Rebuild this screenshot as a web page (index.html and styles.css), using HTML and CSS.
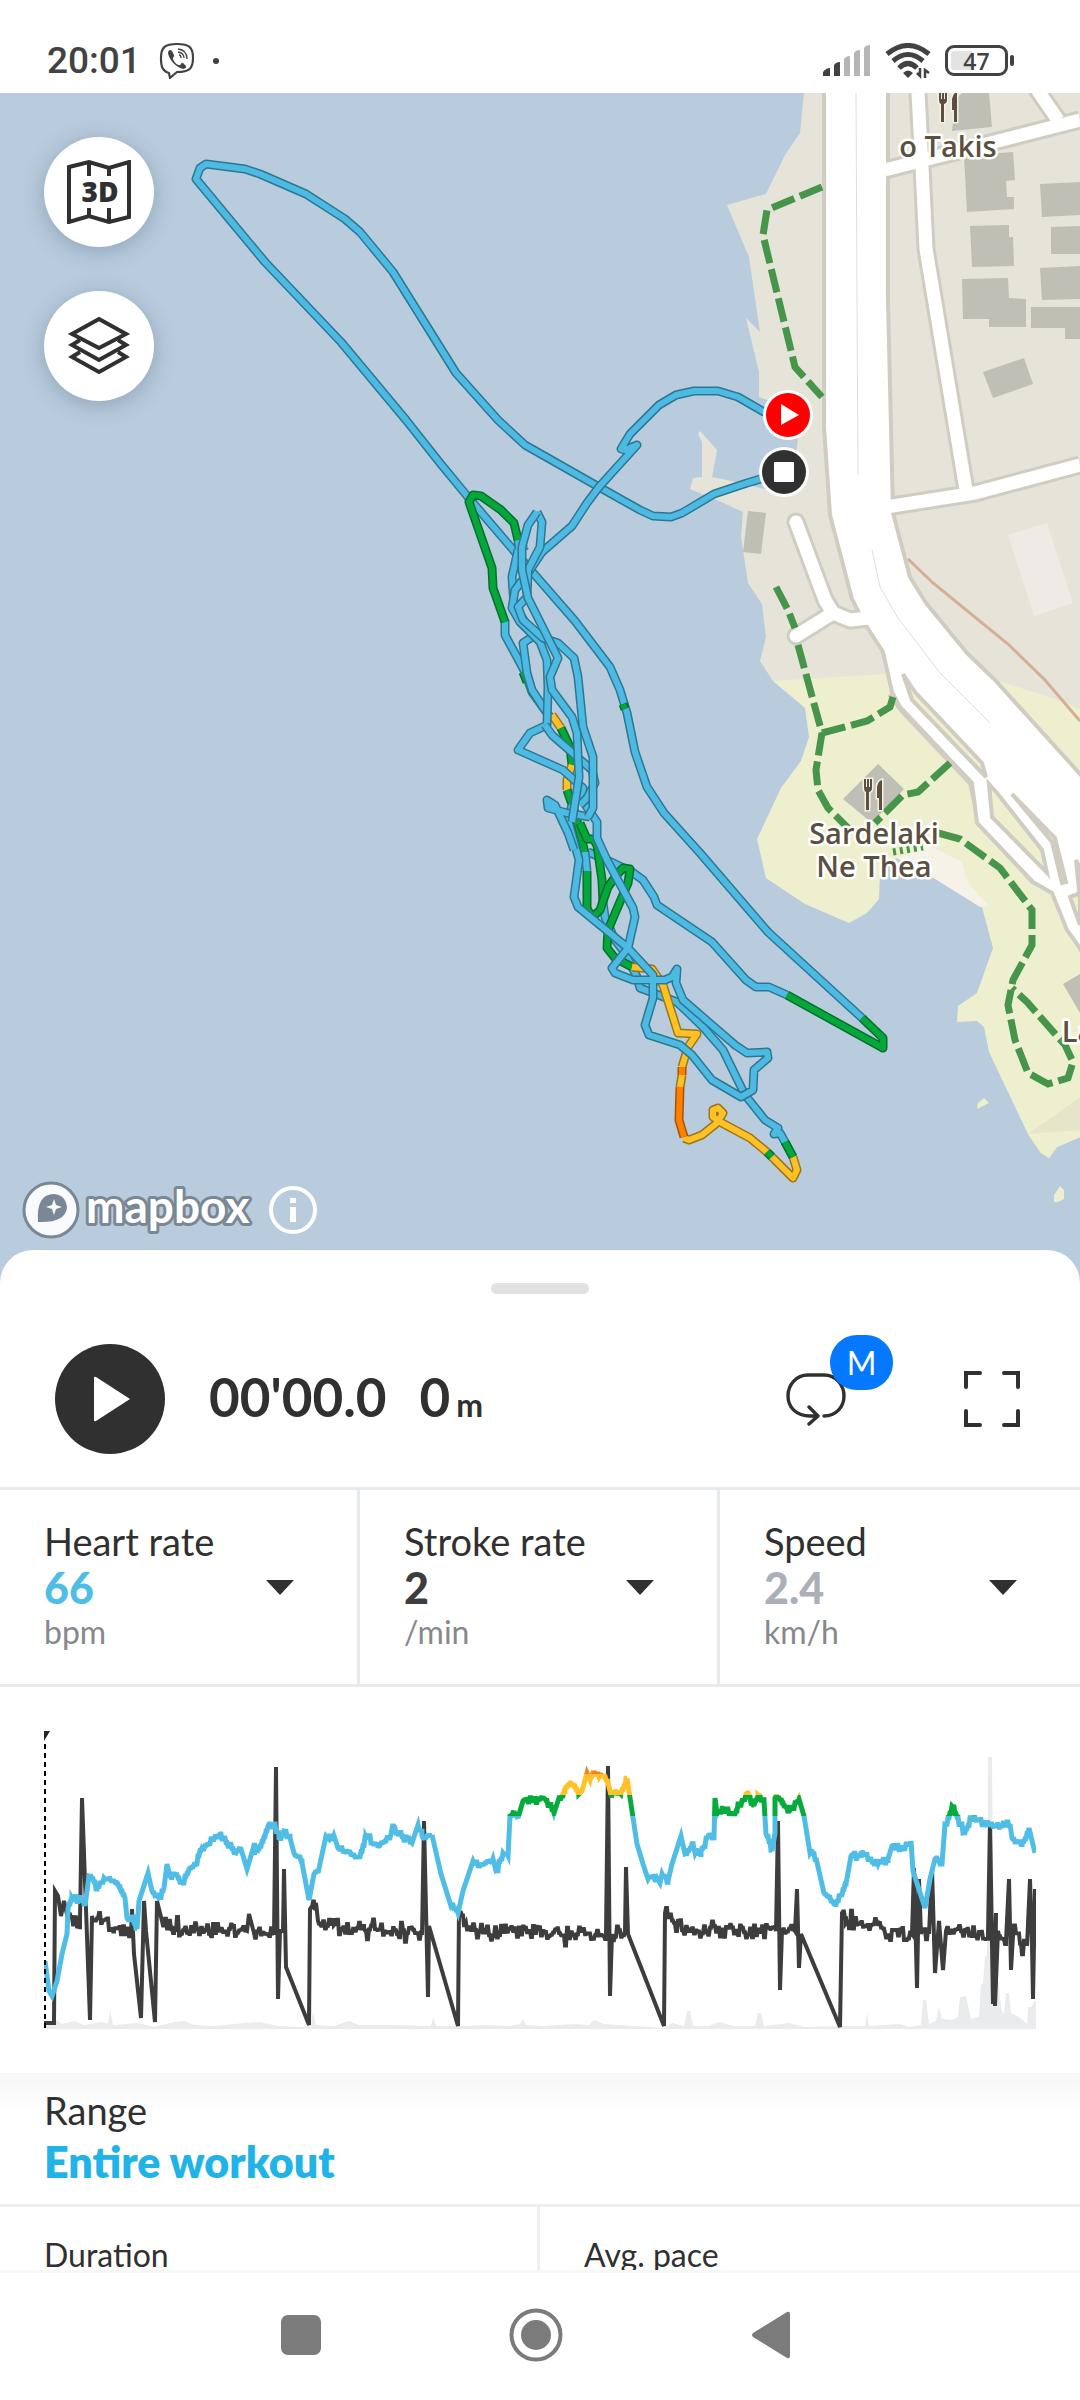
FILE: index.html
```html
<!DOCTYPE html>
<html lang="en">
<head>
    <meta charset="UTF-8">
    <meta name="viewport" content="width=device-width, initial-scale=1.0">
    <title>Workout analysis</title>
    <link rel="stylesheet" href="styles.css">
</head>
<body>
    <!-- Status bar -->
    <header class="status-bar">
        <div class="status-left">
            <span class="clock">20:01</span>
            <svg class="viber" viewBox="0 0 36 38" width="36" height="38" aria-hidden="true">
                <path d="M10 31C3 29 2 24 2 16C2 5 6 2 18 2S34 5 34 16S30 30 18 30L11 36Z" fill="none" stroke="#424242" stroke-width="2.2" stroke-linejoin="round"/>
                <path d="M9 11C9 8 12 7 13 9L15 13C16 15 13 15 14 17C15 20 18 23 20 23C22 24 22 20 24 21L27 24C28 26 25 27 24 27C17 25 10 18 9 11Z" fill="#424242"/>
                <path d="M19 7Q28 8 28 17M19 10Q25 11 25 16M20 13Q22 13 22 16" fill="none" stroke="#424242" stroke-width="1.3"/>
            </svg>
            <span class="dot"></span>
        </div>
        <div class="status-right">
            <svg viewBox="0 0 48 32" width="48" height="32" aria-hidden="true">
                <path d="M0 31V27Q3 23 7 23V31ZM11 31V20Q13 17 17 17V31Z" fill="#424242"/>
                <path d="M21 31V14Q23 11 27 11V31ZM31 31V8Q33 5 37 5V31ZM41 31V3Q43 0 47 0V31Z" fill="#b5b5b5"/>
            </svg>
            <svg viewBox="0 0 46 36" width="46" height="36" aria-hidden="true">
                <path d="M2 11Q23 -6 44 11M8 18Q23 5 38 18M14 25Q23 16 32 25" fill="none" stroke="#424242" stroke-width="5"/>
                <path d="M18 30Q23 25 28 30L23 35Z" fill="#424242"/>
                <path d="M35 25V33L32 30M40 35V27L44 30" fill="none" stroke="#424242" stroke-width="2.5"/>
            </svg>
            <div class="battery"><span>47</span></div>
        </div>
    </header>

    <!-- Map -->
    <section class="map">
        <svg class="map-canvas" viewBox="0 93 1080 1190">
            <rect y="93" width="1080" height="1190" fill="#b9ccde"/>

            <!-- Land -->
            <path class="land" d="M804 93L800 133L785 155L766 194L727 205L749 257L760 332L746 318L759 372L759 397L778 404L800 412L797 447L785 489L764 489L736 482L712 477L717 450L700 431L698 434L702 442V477L693 478L690 489L717 500L743 512L741 537L748 583L762 604L766 637L760 661L773 681L1080 760V93Z"/>
            <path class="park" d="M773 681L805 708L809 737L801 761L781 788L757 839L766 878L805 904L849 923L867 913L879 899L880 873L897 858L937 880L982 907L993 948L977 993L958 1006L957 1022L977 1021L984 1027L989 1052L1028 1134L1041 1153L1049 1158L1057 1147L1080 1137V709L1053 698L995 680L885 674Z"/>
            <path class="park" d="M977 1109L978 1103L984 1098L989 1103ZM1054 1202V1195L1060 1186L1064 1190V1199L1058 1202Z"/>
            <path d="M928 845L962 862L968 883L989 906L980 907L937 880L897 858Z" fill="#f7f2e8"/>
            <path d="M1028 1134L1080 1097V1137L1057 1147L1049 1158L1041 1153Z" fill="#e6e5c9"/>
            <path d="M1028 1134L1080 1130V1137L1057 1147L1049 1158L1041 1153Z" fill="#edefce"/>

            <!-- Buildings -->
            <path class="building" d="M962 93H989L992 127L952 131L955 100ZM964 156L1013 152L1015 180L1006 181L1007 197H1014V209L967 212ZM970 226L1009 225V237H1013L1014 266L972 267ZM962 279L1008 278L1009 298L1026 299V327H989V319H963ZM1040 184L1080 182V215L1042 217ZM1051 227L1080 226V254H1051ZM1040 268L1080 266V299L1042 300ZM1031 307H1080V339H1065V328H1031ZM983 372L1024 358L1033 384L993 398ZM748 511L766 513L761 554L743 552ZM878 764L904 789L872 823L843 799ZM1063 984L1080 974V1013Z"/>
            <path d="M1008 535L1047 523L1073 603L1034 616Z" fill="#eeebe6"/>
            <path class="trail" d="M908 559L933 583L1008 644L1045 680L1080 721"/>

            <!-- Roads -->
            <g class="road-case">
                <path d="M918 93L922 167L926 249L966 490M880 508L975 493L1080 465M885 170L1080 120M1036 88L1058 120"/>
                <path d="M796 522L825 600L833 613L796 636M833 613L850 620L870 618" stroke-linecap="round"/>
                <path d="M895 690L908 707L977 780L986 820L1037 876L1060 888L1088 948M990 775L1055 850L1062 885"/>
            </g>
            <path class="road-main" d="M824 80V427L830 515L852 599L859 613L867 627L883 652L892 692L900 707L972 783L977 823L1033 882L1052 893L1067 930L1090 962V785L995 680L967 653L926 603L910 577L893 513L888 300V80Z"/>
            <g class="road-fill">
                <path d="M918 93L922 167L926 249L966 490M880 508L975 493L1080 465M885 170L1080 120M1036 88L1058 120"/>
                <path d="M796 522L825 600L833 613L796 636M833 613L850 620L870 618" stroke-linecap="round"/>
            </g>
            <path class="island" d="M903 674L915 692L982 763L986 777L912 700ZM989 784L997 793L1042 850L1047 873L992 817ZM1012 794L1055 838L1066 882L1062 883L1052 842ZM1076 860L1080 868V893L1070 897L1080 925V900Z"/>
            <path d="M856 93L857 300L858 475M872 550L880 587L898 618L940 673L990 723" fill="none" stroke="#e0ded6" stroke-width="1"/>

            <!-- Footpaths -->
            <g class="footpath">
                <path d="M822 187L767 210L763 235L795 367L822 397"/>
                <path d="M776 587L788 610L795 628"/>
                <path d="M798 645L822 733L816 770L818 790L828 808L848 828"/>
                <path d="M822 733L867 721L890 707L893 697"/>
                <path d="M950 763L918 792L903 795L875 823"/>
                <path d="M938 833L960 839L1000 868L1032 910V945L1013 980L1008 1005L1015 1040L1028 1073L1048 1084L1068 1078L1073 1062L1065 1045L1027 1002L1012 988"/>
                <path d="M893 852L905 850L923 847" stroke-dasharray="3 4"/>
            </g>

            <!-- Places -->
            <g class="cutlery">
                <use href="#cutlery" x="863" y="779"/>
                <use href="#cutlery" x="938" y="91"/>
            </g>
            <g class="place">
                <text x="948" y="157">o Takis</text>
                <text x="874" y="844">Sardelaki</text>
                <text x="874" y="877">Ne Thea</text>
                <text x="1078" y="1042">La</text>
            </g>

            <g id="tracks"></g>

            <!-- Start and stop pins -->
            <circle cx="788" cy="415" r="25" fill="#fff"/>
            <circle cx="788" cy="415" r="22" fill="#f00"/>
            <path d="M781 404V425L799 415Z" fill="#fff"/>
            <circle cx="784" cy="472" r="25" fill="#fff"/>
            <circle cx="784" cy="472" r="22" fill="#303030"/>
            <rect x="774" y="462" width="20" height="20" rx="1" fill="#fff"/>

            <!-- Attribution -->
            <circle cx="51" cy="1210" r="27" fill="#f9fafc" stroke="#7a8795" stroke-width="3"/>
            <path d="M38 1222Q36 1194 54 1194Q66 1195 67 1208Q65 1223 38 1222Z" fill="#7a8795"/>
            <path d="M54 1199L56 1205L62 1207L56 1209L54 1215L52 1209L46 1207L52 1205Z" fill="#f9fafc"/>
            <text class="wordmark" x="86" y="1223">mapbox</text>
            <circle cx="293" cy="1210" r="22" fill="none" stroke="#fff" stroke-width="4"/>
            <path d="M290 1198H296V1203H290ZM290 1207H296V1222H290Z" fill="#fff"/>

            <defs>
                <g id="cutlery">
                    <path d="M1 0H3V8H4V0H6V8H7V0H9V9Q9 12 6 13V31H3V13Q1 12 1 9ZM19 1V31H16V19H14V8Q15 2 19 1Z"/>
                </g>
            </defs>
        </svg>

        <div class="map-buttons">
            <button class="round-button" aria-label="3D map">
                <svg viewBox="0 0 64 64" width="64" height="64">
                    <path d="M2 7L22 2L42 8L62 2V57L42 62L22 56L2 62ZM22 2V16M42 8V16M22 48V56M42 48V62" fill="none" stroke="#303030" stroke-width="4"/>
                    <text class="icon-3d" x="33" y="42">3D</text>
                </svg>
            </button>
            <button class="round-button" aria-label="Map layers">
                <svg viewBox="0 0 64 64" width="64" height="64">
                    <g fill="none" stroke="#303030" stroke-width="4">
                        <path d="M32 5L59 20L32 34L5 20Z"/>
                        <path d="M13 26L5 31L32 46L59 31L51 26M13 38L5 43L32 58L59 43L51 38"/>
                    </g>
                </svg>
            </button>
        </div>
    </section>

    <!-- Bottom sheet -->
    <main class="sheet">
        <div class="handle"></div>

        <section class="player">
            <button class="play" aria-label="Play">
                <svg viewBox="0 0 38 46" width="38" height="46"><path d="M1 2Q1 0 3 1L37 23L3 45Q1 46 1 44Z" fill="#fff"/></svg>
            </button>
            <span class="time">00'00.0</span>
            <span class="distance">0<small>m</small></span>
            <button class="lap" aria-label="Laps">
                <svg viewBox="0 0 60 54" width="60" height="54">
                    <path d="M38 44C50 44 58 35 58 24S50 3 38 3H22C10 3 2 13 2 24S10 44 24 44H31M23 35L32 44L23 52" fill="none" stroke="#303030" stroke-width="3.4" stroke-linecap="round" stroke-linejoin="round"/>
                </svg>
                <span class="badge">M</span>
            </button>
            <button class="fullscreen" aria-label="Full screen">
                <svg viewBox="0 0 56 56" width="56" height="56">
                    <path d="M2 16V2H16M40 2H54V16M54 40V54H40M16 54H2V40" fill="none" stroke="#303030" stroke-width="4" stroke-linecap="round"/>
                </svg>
            </button>
        </section>

        <section class="metrics">
            <div class="metric">
                <select aria-label="First metric"><option>Heart rate</option></select>
                <strong class="heart">66</strong>
                <span>bpm</span>
            </div>
            <div class="metric">
                <select aria-label="Second metric"><option>Stroke rate</option></select>
                <strong>2</strong>
                <span>/min</span>
            </div>
            <div class="metric">
                <select aria-label="Third metric"><option>Speed</option></select>
                <strong class="speed">2.4</strong>
                <span>km/h</span>
            </div>
        </section>

        <section class="chart">
            <svg viewBox="0 0 992 298">
                <defs>
                    <linearGradient id="zones" gradientUnits="userSpaceOnUse" x1="0" y1="0" x2="0" y2="298">
                        <stop offset="0.144" stop-color="#f5821f"/>
                        <stop offset="0.144" stop-color="#ffc125"/>
                        <stop offset="0.215" stop-color="#ffc125"/>
                        <stop offset="0.215" stop-color="#05ac3d"/>
                        <stop offset="0.285" stop-color="#05ac3d"/>
                        <stop offset="0.285" stop-color="#4fbde5"/>
                    </linearGradient>
                </defs>
                <path id="speedArea" fill="#e9ebed"/>
                <path id="strokeLine" fill="none" stroke="#3d3d3d" stroke-width="4"/>
                <path id="heartLine" fill="none" stroke="url(#zones)" stroke-width="5"/>
                <path d="M1 13V298" stroke="#000" stroke-width="2" stroke-dasharray="5 4"/>
                <path d="M0 0H6L0 10Z" fill="#222"/>
            </svg>
        </section>

        <section class="range">
            <h2>Range</h2>
            <a href="#range">Entire workout</a>
        </section>

        <section class="summary">
            <div>Duration</div>
            <div>Avg. pace</div>
        </section>
    </main>

    <!-- System navigation -->
    <nav class="nav-bar">
        <button aria-label="Recent apps">
            <svg viewBox="0 0 54 54" width="54" height="54"><rect x="7" y="7" width="40" height="40" rx="7" fill="#7b7b7b"/></svg>
        </button>
        <button aria-label="Home">
            <svg viewBox="0 0 54 54" width="54" height="54">
                <circle cx="27" cy="27" r="24.5" fill="none" stroke="#7b7b7b" stroke-width="4"/>
                <circle cx="27" cy="27" r="15" fill="#7b7b7b"/>
            </svg>
        </button>
        <button aria-label="Back">
            <svg viewBox="0 0 54 54" width="54" height="54"><path d="M9 25L43 4Q46 3 46 6V48Q46 51 43 50L9 29Q7 27 9 25Z" fill="#7b7b7b"/></svg>
        </button>
    </nav>

    <script src="script.js"></script>
</body>
</html>
```
FILE: styles.css
```css
* {
    box-sizing: border-box;
}

body {
    margin: 0;
    height: 100vh;
    display: flex;
    flex-direction: column;
    overflow: hidden;
    background: #fff;
    color: #303030;
    font-family: Lato, "Open Sans", sans-serif;
}

button {
    padding: 0;
    border: none;
    background: none;
    color: inherit;
    font: inherit;
    cursor: pointer;
}

svg {
    display: block;
}

/* Status bar */
.status-bar {
    flex: none;
    height: 93px;
    padding: 28px 72px 0 47px;
    display: flex;
    justify-content: space-between;
    align-items: center;
    color: #424242;
    font-family: Roboto, sans-serif;
}

.status-left,
.status-right {
    display: flex;
    align-items: center;
}

.clock {
    margin-right: 18px;
    font-size: 37px;
    line-height: 44px;
    font-weight: 500;
}

.dot {
    width: 6px;
    height: 6px;
    margin-left: 18px;
    border-radius: 50%;
    background: #424242;
}

.status-right {
    gap: 14px;
}

.battery {
    position: relative;
    width: 63px;
    height: 31px;
    border: 3px solid #424242;
    border-radius: 9px;
    background: linear-gradient(to right, #e3e3e3 24px, #fff 24px);
    background-clip: content-box;
    padding: 3px;
}

.battery span {
    position: absolute;
    inset: 0;
    text-align: center;
    font-family: "Open Sans", sans-serif;
    font-size: 23px;
    line-height: 26px;
    font-weight: 600;
}

.battery::after {
    content: "";
    position: absolute;
    right: -9px;
    top: 7px;
    width: 4px;
    height: 11px;
    border-radius: 2px;
    background: #424242;
}

/* Map */
.map {
    flex: none;
    position: relative;
}

.map-canvas {
    width: 100%;
    height: auto;
}

.map-buttons {
    position: absolute;
    top: 44px;
    left: 44px;
    display: grid;
    gap: 44px;
}

.round-button {
    width: 110px;
    height: 110px;
    display: grid;
    place-items: center;
    border-radius: 50%;
    background: #fff;
    box-shadow: 0 4px 22px rgba(40, 70, 100, 0.3);
}

.icon-3d {
    font-family: "Open Sans", sans-serif;
    font-size: 28px;
    font-weight: 800;
    text-anchor: middle;
    fill: #303030;
}

.land {
    fill: #e6e4d8;
}

.park {
    fill: #edefce;
}

.building {
    fill: #bfbfb5;
}

.trail {
    fill: none;
    stroke: #d6ae94;
    stroke-width: 3;
}

.road-case {
    fill: none;
    stroke: #d0ccc1;
    stroke-width: 19;
    stroke-linejoin: round;
}

.road-fill {
    fill: none;
    stroke: #fff;
    stroke-width: 13;
    stroke-linejoin: round;
}

.road-main {
    fill: #fff;
    stroke: #d0ccc1;
    stroke-width: 4;
    stroke-linejoin: round;
}

.island {
    fill: #edefce;
    stroke: #d0ccc1;
    stroke-width: 4;
}

.footpath {
    fill: none;
    stroke: #47954a;
    stroke-width: 7;
    stroke-dasharray: 24 6;
}

.cutlery {
    fill: #5b5040;
    stroke: #f5f0e2;
    stroke-width: 3;
    paint-order: stroke;
}

.place {
    font-family: "Open Sans", "Noto Sans", sans-serif;
    font-size: 29px;
    font-weight: 600;
    text-anchor: middle;
    fill: #5b5040;
    stroke: #fff;
    stroke-width: 5;
    stroke-linejoin: round;
    paint-order: stroke;
}

.wordmark {
    font-size: 46px;
    font-weight: 700;
    fill: #fff;
    stroke: #7a8795;
    stroke-width: 6;
    stroke-linejoin: round;
    paint-order: stroke;
}

.track {
    fill: none;
    stroke-width: 6;
    stroke-linejoin: round;
    stroke-linecap: butt;
}

.track-case {
    fill: none;
    stroke-width: 9;
    stroke-linejoin: round;
}

/* Bottom sheet */
.sheet {
    flex: 1;
    min-height: 0;
    position: relative;
    margin-top: -33px;
    overflow: hidden;
    border-radius: 33px 33px 0 0;
    background: #fff;
}

.handle {
    width: 98px;
    height: 11px;
    margin: 33px auto 0;
    border-radius: 6px;
    background: #e2e2e2;
}

.player {
    display: flex;
    align-items: center;
    padding: 50px 60px 33px 55px;
    border-bottom: 3px solid #e8ebee;
}

.play {
    width: 110px;
    height: 110px;
    display: grid;
    place-items: center;
    padding-left: 4px;
    border-radius: 50%;
    background: #303030;
}

.time,
.distance {
    padding-bottom: 4px;
    font-size: 53px;
    line-height: 60px;
    font-weight: 700;
}

.time {
    margin-left: 44px;
}

.distance {
    display: flex;
    align-items: baseline;
    gap: 6px;
    margin-left: 33px;
}

.distance small {
    font-size: 32px;
    line-height: 40px;
}

.lap {
    position: relative;
    margin-left: auto;
    margin-right: 118px;
}

.badge {
    position: absolute;
    left: 44px;
    bottom: 36px;
    width: 63px;
    height: 55px;
    border-radius: 27px;
    background: #0479ff;
    color: #fff;
    font-size: 32px;
    line-height: 55px;
}

/* Metrics */
.metrics {
    display: grid;
    grid-template-columns: repeat(3, 1fr);
    border-bottom: 3px solid #e8ebee;
}

.metric {
    position: relative;
    display: grid;
    padding: 28px 60px 32px 44px;
    border-right: 3px solid #e8ebee;
}

.metric:last-child {
    border-right: none;
}

.metric select {
    appearance: none;
    height: 46px;
    padding: 0;
    border: none;
    background: none;
    color: #303030;
    font-family: inherit;
    font-size: 38px;
    line-height: 46px;
}

.metric strong {
    font-size: 43px;
    line-height: 48px;
    font-weight: 900;
    color: #3d3d3d;
}

.metric .heart {
    color: #4fbde5;
}

.metric .speed {
    color: #acafb7;
}

.metric span {
    font-size: 32px;
    line-height: 40px;
    color: #87888b;
}

.metric::after {
    content: "";
    position: absolute;
    right: 63px;
    top: 90px;
    border: 14px solid transparent;
    border-top: 15px solid #303030;
    border-bottom: none;
    pointer-events: none;
}

/* Chart */
.chart {
    padding: 44px;
}

.chart svg {
    width: 100%;
    height: auto;
}

/* Range */
.range {
    padding: 13px 44px 0;
    height: 134px;
    border-bottom: 3px solid #efefef;
    background: linear-gradient(#f7f7f7, #fff 42px);
}

.range h2 {
    margin: 0 0 4px;
    font-size: 38px;
    line-height: 48px;
    font-weight: 400;
}

.range a {
    display: block;
    color: #1fb3e8;
    font-size: 43px;
    line-height: 48px;
    font-weight: 800;
    text-decoration: none;
}

.summary {
    display: grid;
    grid-template-columns: 1fr 1fr;
    font-size: 32px;
    line-height: 40px;
}

.summary div {
    padding: 28px 44px;
}

.summary div:first-child {
    border-right: 3px solid #efefef;
}

/* System navigation */
.nav-bar {
    flex: none;
    height: 130px;
    display: flex;
    justify-content: center;
    align-items: center;
    gap: 181px;
    padding: 0 8px 4px 0;
    border-top: 3px solid #f7f7f7;
    background: #fff;
}
```
FILE: script.js
```js
const SVG_NS = 'http://www.w3.org/2000/svg';

// line colour and outline colour of each heart rate zone
const ZONES = {
    blue: ['#4dbae3', '#2d7791'],
    green: ['#05a63a', '#05702a'],
    yellow: ['#ffc125', '#9a7716'],
    orange: ['#ff7f00', '#a85400']
};

const TRACKS = [
    // inner legs
    ['blue', '588,852 607,860 632,872 643,880 654,897 657,905 712,942 746,980 756,987 769,987 787,995'],
    ['blue', '793,1157 785,1142 780,1133 774,1134 778,1128 765,1120 745,1095 723,1050 703,1027 677,1002 640,988 637,977 625,953 615,940 605,917 603,903'],
    ['blue', '505,620 505,635 525,672 532,692 550,717'],
    ['green', '523,672 527,682'],
    ['yellow', '552,715 561,728'],
    ['green', '561,728 570,747 572,765'],
    ['yellow', '572,765 567,780 567,790'],
    ['green', '567,790 575,813 585,853'],
    ['blue', '585,852 587,871'],
    ['green', '603,903 602,880 597,845 593,839 587,839 580,823'],
    ['green', '587,871 587,908 590,914 595,915 600,910 608,887 616,876 623,868 630,869 628,883 608,930 607,948 615,958 632,967'],
    ['yellow', '632,967 652,969 663,985 678,1033 697,1034 688,1047 682,1067'],
    ['orange', '682,1067 682,1075'],
    ['yellow', '682,1075 680,1087'],
    ['yellow', '684,1138 689,1140 702,1135 717,1123 723,1113 718,1108 713,1110 713,1117 722,1123 750,1138 767,1152'],
    ['orange', '680,1087 679,1120 684,1137'],
    ['green', '767,1152 772,1157'],
    ['yellow', '772,1157 793,1178 797,1170 793,1157'],
    ['green', '793,1157 785,1142'],
    // big loop
    ['blue', '784,472 747,483 714,494 682,513 671,517 653,516 640,510 599,487 525,445 498,420 456,373 393,272 360,232 345,219 306,194 260,174 245,169 206,164 200,168 196,179 265,262 341,342 406,420 440,463 468,497 515,552 535,575 575,621 610,667 620,690 627,713 635,752 647,787 664,813 700,853 768,932 862,1018'],
    ['green', '862,1018 883,1038 883,1048 787,995'],
    ['green', '623,704 625,709'],
    ['blue', '518,540 519,548 527,545'],
    ['green', '518,540 514,523 501,510 481,496 473,495 469,502 492,568 493,588 505,622'],
    // spine
    ['blue', '518,550 512,577 514,605 527,625 540,635 532,637 523,643 527,673 532,690 545,710'],
    ['blue', '788,415 764,412 738,397 718,391 694,391 676,395 659,405 630,434 621,449 625,450 637,445 599,487 587,503 572,526 542,552 530,570 515,590 512,608 520,622 540,642 547,660 548,687 547,725 530,733 518,750 563,770 583,788 582,800 597,822 597,838 607,860 633,908 635,917 628,948 612,968 615,973 633,980 665,980 672,977 677,969 676,983 683,1000 735,1045 747,1053 767,1052 768,1058 754,1070 753,1090 741,1097 712,1080 692,1055 680,1045 649,1035 645,1025 653,998 653,975 628,948 578,907 574,897 579,860 568,820 572,805'],
    ['blue', '545,725 552,735 592,770 595,783 587,798 580,805'],
    ['blue', '590,817 567,813 548,808 547,800 555,805 568,833 574,850'],
    ['blue', '537,512 542,522 540,547 528,570 527,597 518,607 523,620 543,638 558,643 574,658 578,677 583,727 593,757 593,808 588,817'],
    ['blue', '572,822 579,777 577,733 572,717 552,690 550,677 558,658 550,642 528,598 522,570 522,547 528,525 537,512']
];

function addPolyline(parent, points, className, color) {
    const line = document.createElementNS(SVG_NS, 'polyline');
    line.setAttribute('points', points);
    line.setAttribute('class', className);
    line.setAttribute('stroke', color);
    parent.appendChild(line);
}

function drawTracks() {
    const layer = document.getElementById('tracks');
    for (const [zone, points] of TRACKS) {
        const [fill, outline] = ZONES[zone];
        addPolyline(layer, points, 'track-case', outline);
        addPolyline(layer, points, 'track', fill);
    }
}

const HEART = '1,230 5,260 8,265 13,250 18,223 23,203 24,178 28,167 37,169 41,175 45,145 53,158 60,147 72,152 81,167 83,187 89,188 93,198 95,170 104,142 108,160 115,167 120,157 123,133 126,145 131,143 138,152 145,138 151,133 158,117 175,104 192,122 197,118 203,138 209,118 213,122 224,95 229,94 235,107 240,100 246,107 250,122 258,132 265,169 270,143 274,142 282,105 285,108 290,105 294,117 314,126 322,105 334,117 347,103 349,93 353,102 368,112 374,94 378,105 388,104 397,143 407,175 414,182 419,160 429,130 436,135 449,128 452,140 459,122 464,125 466,85 470,80 474,87 479,70 496,68 501,68 510,82 515,67 521,58 529,52 535,63 538,60 543,42 546,49 550,40 555,46 563,48 566,60 577,63 583,47 588,80 593,113 599,133 604,148 613,147 616,152 618,143 624,150 628,133 637,105 641,123 649,113 651,122 657,121 665,102 670,107 671,67 673,83 680,78 689,83 702,63 710,75 714,64 720,70 722,103 728,120 731,102 731,67 737,67 744,82 755,68 760,85 766,122 772,127 780,162 790,173 794,172 802,153 807,125 817,122 834,133 844,128 848,115 859,118 867,110 869,140 881,177 886,148 891,128 898,133 901,93 908,75 919,102 927,87 942,93 966,93 968,107 978,112 985,97 991,122';

const STROKE = '0,292 10,292 11,160 14,165 17,185 20,170 24,188 36,190 38,67 46,289 48,185 62,188 70,200 87,203 88,178 90,223 97,287 100,170 102,200 111,291 113,170 118,190 130,198 203,200 205,183 210,202 230,204 232,36 234,268 236,200 239,200 240,138 242,236 265,294 266,178 272,172 274,190 290,194 320,198 378,204 380,90 384,266 385,195 414,295 415,180 422,192 440,200 562,203 564,35 566,265 568,203 581,200 582,136 584,203 620,295 621,182 631,193 645,200 732,200 734,90 736,259 738,200 751,200 753,158 755,237 757,203 796,296 798,182 802,192 834,195 841,202 868,203 870,137 873,257 875,148 877,203 885,203 888,137 891,242 895,190 899,239 902,200 944,202 946,92 949,273 952,182 951,275 954,200 962,210 965,148 967,239 969,205 983,215 986,148 988,215 989,268 991,158';

// x,height pairs above the base line
const SPEED = '0,3 12,9 18,5 30,8 40,4 58,7 64,5 66,19 69,4 95,6 110,2 130,7 140,8 150,4 170,3 190,5 215,7 235,3 255,2 267,3 269,17 272,4 290,3 305,8 315,4 350,4 387,3 389,12 392,3 420,3 440,4 465,3 476,5 479,10 482,4 500,3 530,5 545,4 550,9 560,5 590,3 620,1 628,6 640,3 643,18 646,18 649,3 665,3 675,7 690,3 711,3 714,16 717,16 720,3 745,6 760,2 800,3 821,3 823,16 825,3 855,5 865,2 877,4 879,29 882,29 885,5 892,8 895,22 898,10 908,9 914,12 916,32 922,33 927,10 935,12 937,45 939,46 941,73 943,74 944,272 948,272 950,60 955,45 957,20 960,15 962,36 965,36 967,16 975,12 983,5 984,22 988,22 990,28 992,28';

const parse = text => text.split(' ').map(pair => pair.split(',').map(Number));

// fills the calm parts of a series with small steps, the same on each load
function withNoise(points, amount, seed) {
    let state = seed;
    const random = () => {
        state = (state * 16807) % 2147483647;
        return state / 2147483647 - 0.5;
    };
    const result = [points[0]];
    for (let i = 1; i < points.length; i++) {
        const [x0, y0] = points[i - 1];
        const [x1, y1] = points[i];
        const width = x1 - x0;
        if (width > 3 && y0 < 280 && Math.abs(y1 - y0) < Math.min(width * 3, 35)) {
            // each step goes up or down first, then along
            for (let x = x0 + 1; x < x1; x += 2) {
                const y = y0 + (y1 - y0) * (x - x0) / width;
                const peak = random() > 0.4 ? 2 : 1;
                const step = y + random() * amount * peak;
                result.push([x, step], [x + 1, step]);
            }
        }
        result.push(points[i]);
    }
    return result;
}

const toPath = points => 'M' + points.map(p => p[0] + ' ' + p[1].toFixed(1)).join('L');

function drawChart() {
    const speed = parse(SPEED).map(([x, h]) => [x, 298 - h]);
    document.getElementById('speedArea').setAttribute('d', toPath(speed) + 'V298H0Z');
    document.getElementById('strokeLine').setAttribute('d', toPath(withNoise(parse(STROKE), 13, 77)));
    document.getElementById('heartLine').setAttribute('d', toPath(withNoise(parse(HEART), 5, 31)));
}

drawTracks();
drawChart();
```
